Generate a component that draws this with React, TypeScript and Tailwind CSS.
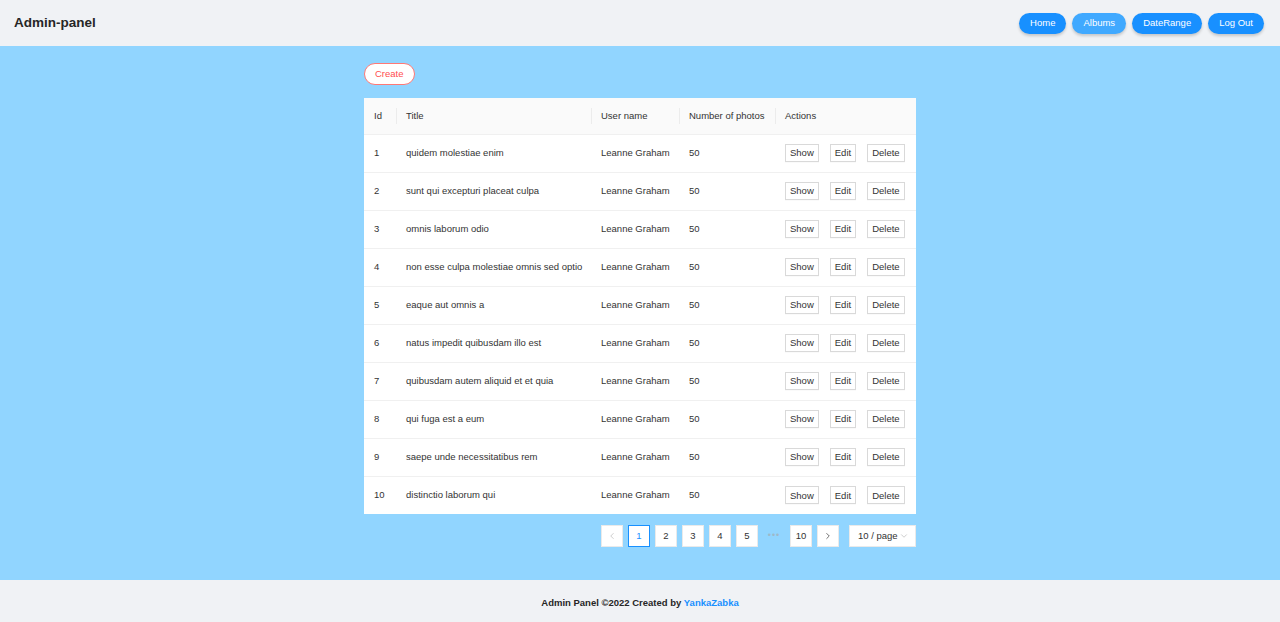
import React from 'react';
import { ChevronLeft, ChevronRight, ChevronDown } from 'lucide-react';

const titles = [
  'quidem molestiae enim',
  'sunt qui excepturi placeat culpa',
  'omnis laborum odio',
  'non esse culpa molestiae omnis sed optio',
  'eaque aut omnis a',
  'natus impedit quibusdam illo est',
  'quibusdam autem aliquid et et quia',
  'qui fuga est a eum',
  'saepe unde necessitatibus rem',
  'distinctio laborum qui',
];

const navItems = ['Home', 'Albums', 'DateRange', 'Log Out'];

const ActionButton = ({ label }: { label: string }) => (
  <button className="block h-[18px] px-[4px] border border-[#d9d9d9] bg-white text-[9.5px] leading-none text-[#333] shadow-[0_1px_0_rgba(0,0,0,0.02)]">
    {label}
  </button>
);

const PageItem = ({ children, active = false }: { children: React.ReactNode; active?: boolean }) => (
  <div
    className={`w-[22px] h-[22px] flex items-center justify-center bg-white text-[9.5px] border ${
      active ? 'border-[#1890ff] text-[#1890ff]' : 'border-[#eaeaea] text-[#333]'
    }`}
  >
    {children}
  </div>
);

const Sep = () => <span className="absolute left-0 top-1/2 -translate-y-1/2 h-[16px] w-px bg-[#ececec]" />;

export default function App() {
  return (
    <div className="min-h-[622px] flex flex-col font-['Liberation_Sans',Arial,sans-serif] text-[#333]">
      {/* Header */}
      <header className="h-[46px] bg-[#f0f2f5] flex items-center justify-between pl-[14px] pr-4">
        <h1 className="text-[13.5px] font-bold text-[#262626]">Admin-panel</h1>
        <nav className="flex items-center gap-[6px]">
          {navItems.map((item) => (
            <button
              key={item}
              className={`block h-[21px] px-[11px] rounded-full text-white text-[9.5px] shadow-[0_2px_3px_rgba(0,0,0,0.18)] ${
                item === 'Albums' ? 'bg-[#40a9ff]' : 'bg-[#1890ff]'
              }`}
            >
              {item}
            </button>
          ))}
        </nav>
      </header>

      {/* Content */}
      <main className="h-[534px] bg-[#91d5ff] pt-[17px]">
        <div className="w-[552px] mx-auto">
          <button className="block h-[22px] px-[10px] rounded-full bg-white border border-[#ff7875] text-[#ff4d4f] text-[9.5px]">
            Create
          </button>

          <table className="mt-[13px] w-full table-fixed bg-white text-[9.5px] text-left border-collapse">
            <thead>
              <tr className="h-[36px] bg-[#fafafa] border-b border-[#f0f0f0]">
                <th className="w-[32px] pl-[10px] font-normal">Id</th>
                <th className="w-[195px] font-normal relative pl-[10px]">
                  <Sep />
                  Title
                </th>
                <th className="w-[88px] font-normal relative pl-[10px]">
                  <Sep />
                  User name
                </th>
                <th className="w-[96px] font-normal relative pl-[10px] whitespace-nowrap">
                  <Sep />
                  Number of photos
                </th>
                <th className="font-normal relative pl-[10px]">
                  <Sep />
                  Actions
                </th>
              </tr>
            </thead>
            <tbody>
              {titles.map((title, i) => (
                <tr key={i} className={`h-[38px] ${i < titles.length - 1 ? 'border-b border-[#f0f0f0]' : ''}`}>
                  <td className="pl-[10px]">{i + 1}</td>
                  <td className="pl-[10px] whitespace-nowrap">{title}</td>
                  <td className="pl-[10px] whitespace-nowrap">Leanne Graham</td>
                  <td className="pl-[10px]">50</td>
                  <td className="pl-[10px]">
                    <div className="flex items-center gap-[11px]">
                      <ActionButton label="Show" />
                      <ActionButton label="Edit" />
                      <ActionButton label="Delete" />
                    </div>
                  </td>
                </tr>
              ))}
            </tbody>
          </table>

          {/* Pagination */}
          <div className="mt-[11px] flex justify-end items-center">
            <div className="flex items-center gap-[5px]">
              <PageItem>
                <ChevronLeft className="w-[10px] h-[10px] text-[#c4c4c4]" strokeWidth={2} />
              </PageItem>
              <PageItem active>1</PageItem>
              <PageItem>2</PageItem>
              <PageItem>3</PageItem>
              <PageItem>4</PageItem>
              <PageItem>5</PageItem>
              <div className="w-[22px] h-[22px] flex items-center justify-center text-[#9fb8c9] text-[9px] tracking-[1px]">
                •••
              </div>
              <PageItem>10</PageItem>
              <PageItem>
                <ChevronRight className="w-[10px] h-[10px] text-[#555]" strokeWidth={2} />
              </PageItem>
            </div>
            <div className="ml-[10px] w-[67px] h-[22px] bg-white border border-[#eaeaea] flex items-center justify-between pl-[8px] pr-[6px] text-[9.5px] whitespace-nowrap">
              <span>10 / page</span>
              <ChevronDown className="w-[10px] h-[10px] text-[#c4c4c4]" strokeWidth={2} />
            </div>
          </div>
        </div>
      </main>

      {/* Footer */}
      <footer className="h-[42px] bg-[#f0f2f5] flex items-center justify-center text-[9.5px] font-bold text-[#262626] pt-[4px]">
        <span>
          Admin Panel ©2022 Created by <span className="text-[#1890ff]">YankaZabka</span>
        </span>
      </footer>
    </div>
  );
}
